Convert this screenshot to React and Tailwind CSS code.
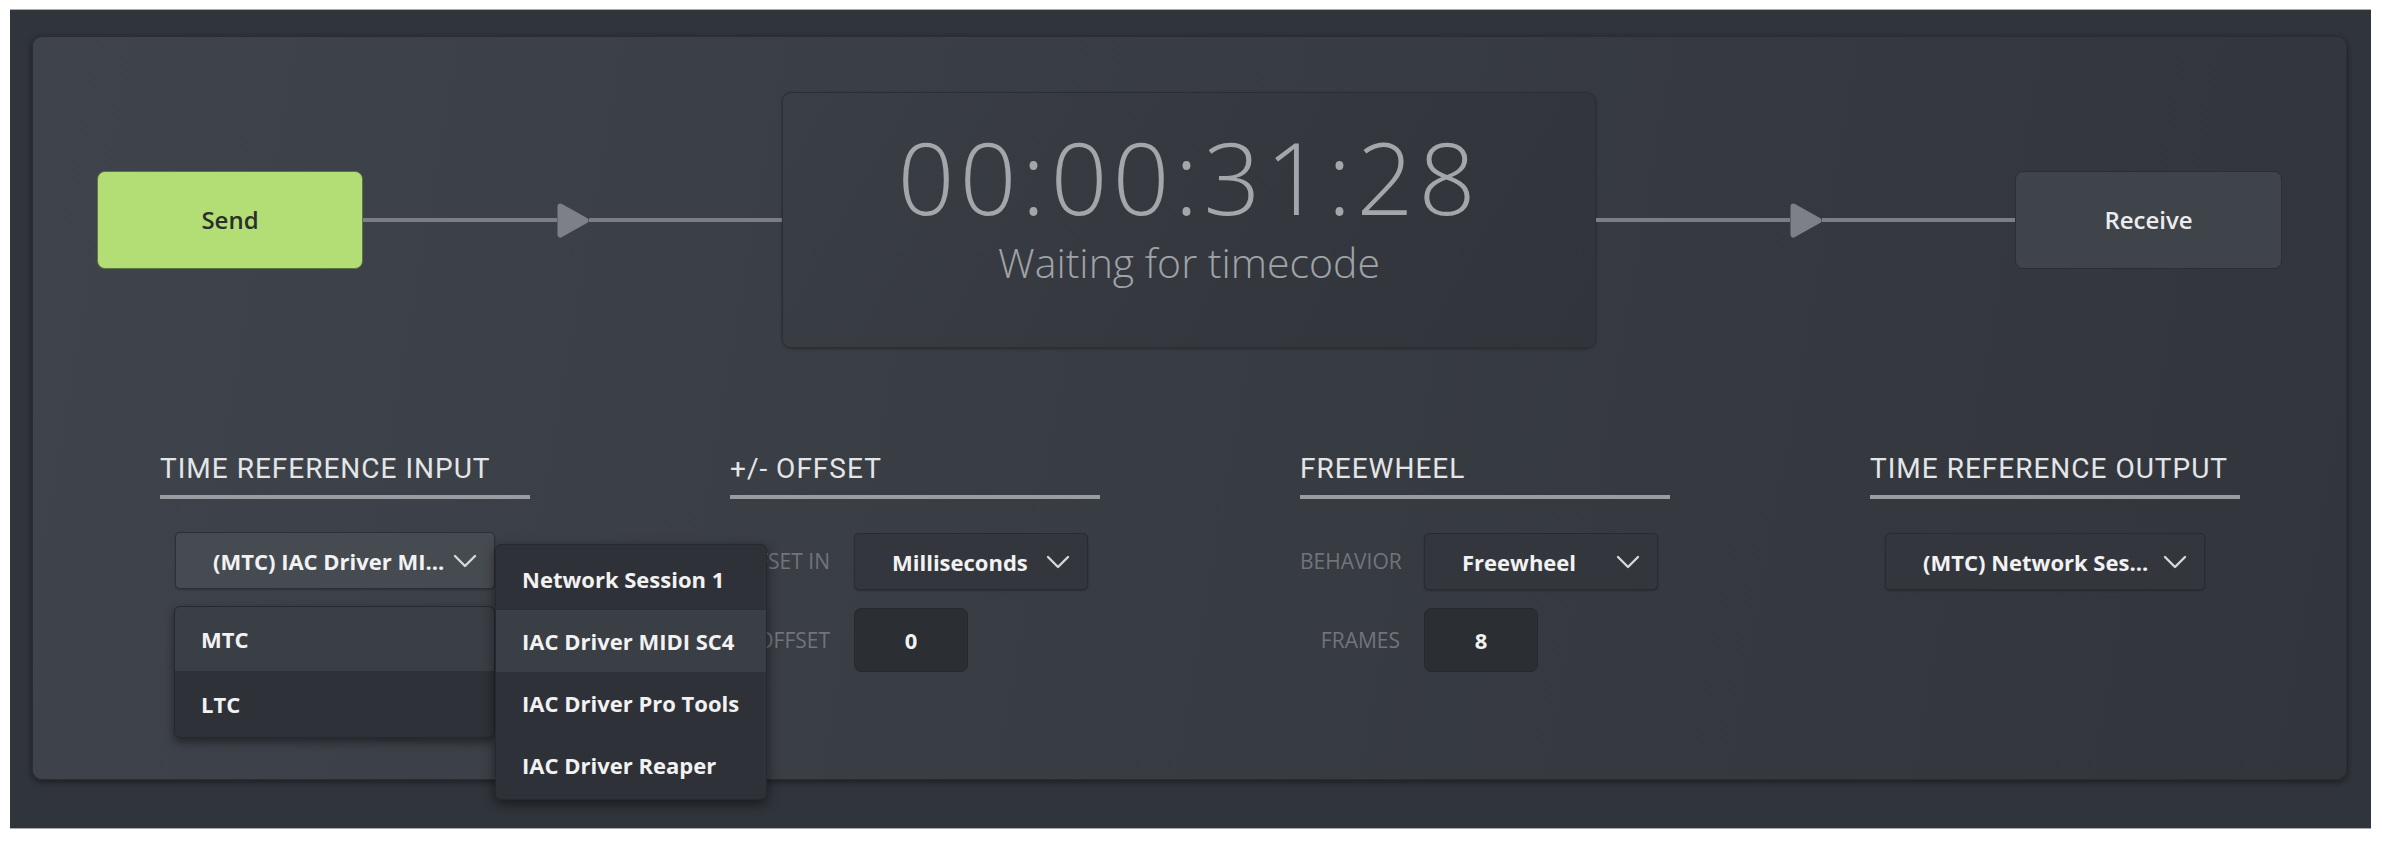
import React from "react";

const sans = { fontFamily: '"Open Sans", "Noto Sans", sans-serif' };

function Arrow() {
  return (
    <div className="flex-1 flex items-center">
      <div className="flex-1 h-[4px] bg-[#7b7e84]" />
      <svg width="32" height="35" viewBox="0 0 32 35" className="block shrink-0">
        <polygon points="3.5,3.5 28.5,17.5 3.5,31.5" fill="#7d8187" stroke="#7d8187" strokeWidth="6" strokeLinejoin="round" />
      </svg>
      <div className="flex-1 h-[4px] bg-[#7b7e84]" />
    </div>
  );
}

function Chevron() {
  return (
    <svg width="24" height="14" viewBox="0 0 24 14" className="block shrink-0">
      <polyline points="2,2 12,12 22,2" fill="none" stroke="#d6d8db" strokeWidth="2.4" strokeLinecap="round" strokeLinejoin="round" />
    </svg>
  );
}

function Header({ children }) {
  return (
    <div>
      <div
        className="text-[28px] leading-none tracking-[1px] text-[#e4e5e7] whitespace-nowrap"
        style={{ fontFamily: 'Roboto, "Open Sans", sans-serif' }}
      >
        {children}
      </div>
      <div className="mt-[12px] h-[4px] w-[370px] bg-[#999ca1]" />
    </div>
  );
}

function Select({ label, width, light }) {
  return (
    <div
      className={
        "flex items-center justify-between pl-[37px] pr-[17px] h-[57px] rounded-[5px] border shadow-[0_1px_2px_rgba(0,0,0,0.25)] " +
        (light ? "bg-[#464b52] border-[#2c2f34]" : "bg-[#33373d] border-[#282b30]")
      }
      style={{ width }}
    >
      <span className="text-[22px] font-bold text-[#f2f2f2] whitespace-nowrap leading-none">{label}</span>
      <Chevron />
    </div>
  );
}

function Label({ children }) {
  return (
    <div className="w-[100px] text-right text-[21px] leading-none text-[#71757b] whitespace-nowrap">{children}</div>
  );
}

function NumInput({ value }) {
  return (
    <div className="w-[114px] h-[64px] rounded-[7px] bg-[#2b2e33] border border-[#27292e] flex items-center justify-center text-[22px] font-bold text-[#f2f2f2]">
      {value}
    </div>
  );
}

export default function App() {
  return (
    <div className="w-[2382px] h-[842px] bg-white pt-[9px] pl-[10px]" style={sans}>
      <div className="w-[2361px] h-[820px] bg-[#30343b] border-t border-b border-[#a9abae] pt-[26px] pl-[22px]">
        <div className="relative w-[2315px] h-[744px] rounded-[10px] border border-[#2a2d32] shadow-[0_2px_6px_rgba(0,0,0,0.45)] bg-[linear-gradient(100deg,#3f444c_0%,#393d44_40%,#32363c_100%)]">
          {/* top flow row */}
          <div className="flex items-center px-[64px] pt-[55px] h-[311px]">
            <div className="w-[266px] h-[98px] rounded-[8px] bg-[#b3de76] border border-[#5f7445] flex items-center justify-center text-[24px] font-semibold text-[#2b2f2b]">
              Send
            </div>
            <Arrow />
            <div className="w-[814px] h-[256px] rounded-[9px] border border-[#2b2e33] bg-[linear-gradient(120deg,#3a3e45_0%,#34383e_60%,#31353b_100%)] shadow-[0_1px_3px_rgba(0,0,0,0.3)] flex flex-col items-center pt-[33px]">
              <div className="h-[100px] text-[100px] leading-none font-light tracking-[5px] text-[#a3a6aa]">00:00:31:28</div>
              <div className="mt-[16px] text-[41px] leading-none font-light text-[#a0a3a7]">Waiting for timecode</div>
            </div>
            <Arrow />
            <div className="w-[267px] h-[98px] rounded-[8px] bg-[#3f434a] border border-[#2b2e33] flex items-center justify-center text-[24px] font-semibold text-[#ececec]">
              Receive
            </div>
          </div>

          {/* settings */}
          <div className="flex gap-[200px] pl-[127px] mt-[107px]">
            {/* col 1 */}
            <div className="w-[370px]">
              <Header>TIME REFERENCE INPUT</Header>
              <div className="relative ml-[15px] mt-[33px] w-[320px]">
                <Select label="(MTC) IAC Driver MI..." width={320} light />
                <div className="absolute left-[-1px] top-[74px] w-[321px] rounded-[6px] overflow-hidden border border-[#26292d] bg-[#2e3137] shadow-[0_4px_10px_rgba(0,0,0,0.45)]">
                  <div className="h-[64px] bg-[#3a3e45] flex items-center pl-[26px] text-[22px] font-bold text-[#f2f2f2]">MTC</div>
                  <div className="h-[66px] flex items-center pl-[26px] text-[22px] font-bold text-[#f2f2f2]">LTC</div>
                </div>
                <div className="absolute left-[320px] top-[12px] w-[272px] rounded-[6px] overflow-hidden border border-[#26292d] bg-[#2e3137] shadow-[0_4px_12px_rgba(0,0,0,0.5)] py-[3px] z-10">
                  {["Network Session 1", "IAC Driver MIDI SC4", "IAC Driver Pro Tools", "IAC Driver Reaper"].map((t, i) => (
                    <div
                      key={t}
                      className={
                        "h-[62px] flex items-center pl-[26px] text-[22px] font-bold text-[#f2f2f2] whitespace-nowrap " +
                        (i === 1 ? "bg-[#3a3e45]" : "")
                      }
                    >
                      {t}
                    </div>
                  ))}
                </div>
              </div>
            </div>

            {/* col 2 */}
            <div className="w-[370px]">
              <Header>+/- OFFSET</Header>
              <div className="mt-[34px] flex flex-col gap-[18px]">
                <div className="flex items-center gap-[24px]">
                  <Label>OFFSET IN</Label>
                  <Select label="Milliseconds" width={234} />
                </div>
                <div className="flex items-center gap-[24px]">
                  <Label>OFFSET</Label>
                  <NumInput value="0" />
                </div>
              </div>
            </div>

            {/* col 3 */}
            <div className="w-[370px]">
              <Header>FREEWHEEL</Header>
              <div className="mt-[34px] flex flex-col gap-[18px]">
                <div className="flex items-center gap-[24px]">
                  <Label>BEHAVIOR</Label>
                  <Select label="Freewheel" width={234} />
                </div>
                <div className="flex items-center gap-[24px]">
                  <Label>FRAMES</Label>
                  <NumInput value="8" />
                </div>
              </div>
            </div>

            {/* col 4 */}
            <div className="w-[370px]">
              <Header>TIME REFERENCE OUTPUT</Header>
              <div className="ml-[15px] mt-[34px]">
                <Select label="(MTC) Network Ses..." width={320} />
              </div>
            </div>
          </div>
        </div>
      </div>
    </div>
  );
}
